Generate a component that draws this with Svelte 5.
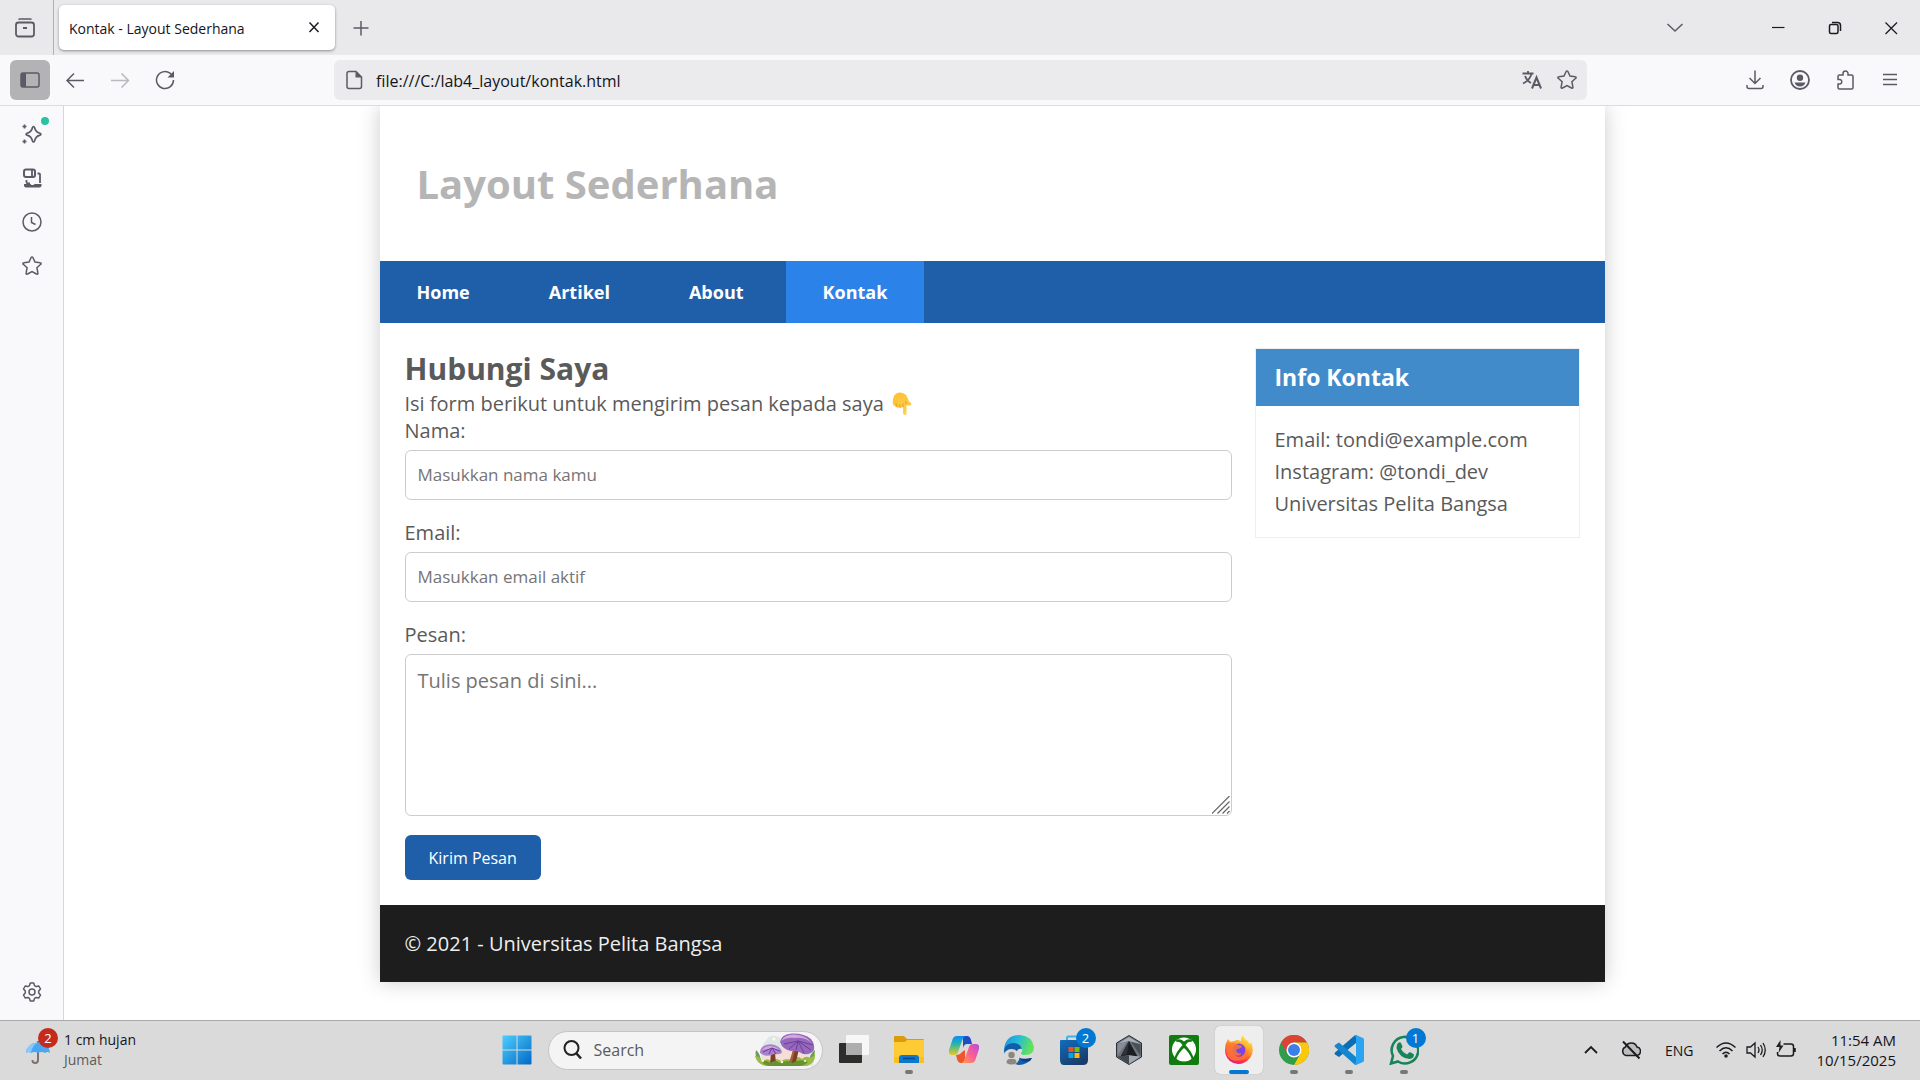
<script>
  let name = $state('');
  let email = $state('');
  let message = $state('');

  const links = ['Home', 'Artikel', 'About', 'Kontak'];
  const current = 'Kontak';
</script>

{#snippet star()}
  <svg class="icon" viewBox="0 0 20 20"><path d="M9.1 1.500a1 1 0 0 1 1.800 0l2.100 4.600 5.200.6a.9.9 0 0 1 .5 1.600l-3.800 3.500 1 5.200a.9.9 0 0 1-1.400 1L10 15.600 5.500 18a.9.9 0 0 1-1.400-1l1-5.200L1.300 8.300a.9.9 0 0 1 .5-1.600l5.200-.6z" /></svg>
{/snippet}

<div class="screen">
  <header class="tabs">
    <button class="tool recent" aria-label="Recent browsing">
      <svg class="icon" viewBox="0 0 20 20"><path d="M3.500 1.500Q4 .9 5 .9h10q1 0 1.500.6" /><rect x="1" y="4.500" width="18" height="14" rx="2.500" stroke-width="1.800" /><path d="M8 10h4" stroke-width="2" /></svg>
    </button>
    <div class="tab">
      <span>Kontak - Layout Sederhana</span>
      <button class="tool small" aria-label="Close tab"><svg class="icon dark" viewBox="0 0 20 20"><path d="m5.500 4.500 9 9.500m0-9.500-9 9.500" /></svg></button>
    </div>
    <button class="tool plus" aria-label="New tab"><svg class="icon" viewBox="0 0 20 20"><path d="M10 3v14.500M2.500 10h15" /></svg></button>
    <div class="window">
      <button class="tool list" aria-label="List all tabs"><svg class="icon" viewBox="0 0 20 20"><path d="m2.500 6 7.500 7 7.500-7" /></svg></button>
      <button class="tool" aria-label="Minimize"><svg class="icon dark" viewBox="0 0 20 20"><path d="M3 9.500h12.500" stroke-width="1.200" /></svg></button>
      <button class="tool" aria-label="Restore"><svg class="icon dark" viewBox="0 0 20 20"><rect x="4.500" y="6.500" width="8.500" height="9" rx="1.500" /><path d="M7 4.500h5.500q3 0 3 3V13" /></svg></button>
      <button class="tool" aria-label="Close"><svg class="icon dark" viewBox="0 0 20 20"><path d="m4.500 4.500 11.500 11.500m0-11.500-11.500 11.500" stroke-width="1.300" /></svg></button>
    </div>
  </header>

  <div class="toolbar">
    <div class="group">
      <button class="tool pressed" aria-label="Sidebar"><svg class="icon" viewBox="0 0 20 20"><rect x="1" y="3" width="18" height="14" rx="2" /><path d="M2 3h4v14H2l-1-1V4z" fill="#5b5b66" stroke="none" /></svg></button>
      <button class="tool" aria-label="Back"><svg class="icon" viewBox="0 0 20 20"><path d="M19 10.500H2M9 3.500l-7 7 7 7" /></svg></button>
      <button class="tool faded" aria-label="Forward"><svg class="icon" viewBox="0 0 20 20"><path d="M1 10.500h17M11.500 3.500l7 7-7 7" /></svg></button>
      <button class="tool" aria-label="Reload"><svg class="icon" viewBox="0 0 20 20"><path d="M18.500 10A8.500 8.500 0 1 1 15 3.200l1.500 1.300" /><path d="M19 1v6.500h-6.500z" fill="#5b5b66" stroke="none" /></svg></button>
    </div>
    <div class="address">
      <svg class="icon" viewBox="0 0 20 20"><path d="M5 1.500h7l5.500 5.500v9.500q0 2-2 2H5q-2 0-2-2v-13q0-2 2-2z" /><path d="M11.500 1v6.500H18z" fill="#5b5b66" stroke="none" /></svg>
      <input type="text" aria-label="Address" value="file:///C:/lab4_layout/kontak.html" />
      <button class="tool slim" aria-label="Translate"><svg class="icon" viewBox="0 0 20 20"><path d="M.5 3.500h11M6 1v2.500M9.500 4Q7.500 10.500 1 13.500M3 6q2 5 6 7" stroke-width="1.800" /><path d="m10 18.500 4.500-11 4.500 11M11.500 15h6" stroke-width="2" /></svg></button>
      <button class="tool slim" aria-label="Bookmark">{@render star()}</button>
    </div>
    <div class="group end">
      <button class="tool" aria-label="Downloads"><svg class="icon" viewBox="0 0 20 20"><path d="M10 .5v13M4.500 8l5.500 5.500L15.500 8M2 15v1.500q0 2 2 2h12q2 0 2-2V15" /></svg></button>
      <button class="tool" aria-label="Account"><svg class="icon" viewBox="0 0 20 20"><circle cx="10" cy="10" r="9" stroke-width="1.800" /><circle cx="10" cy="7.800" r="3.200" fill="#5b5b66" stroke="none" /><path d="M4.500 12.500h11q-1.500 4-5.500 4t-5.500-4z" fill="#5b5b66" stroke="none" /></svg></button>
      <button class="tool" aria-label="Extensions"><svg class="icon" viewBox="0 0 20 20"><path d="M8 5V3.500a2.500 2.500 0 0 1 5 0V5h3.500q1.500 0 1.500 1.500v11q0 1.500-1.500 1.500h-12Q3 19 3 17.500V14h2a2.300 2.300 0 0 0 0-4.500H3v-3Q3 5 4.500 5z" /></svg></button>
      <button class="tool" aria-label="Menu"><svg class="icon" viewBox="0 0 20 20"><path d="M3 4.500h14M3 9.500h14M3 14.500h14" /></svg></button>
    </div>
  </div>

  <div class="body">
    <aside class="rail">
      <button class="tool chat" aria-label="AI chatbot">
        <svg class="icon" viewBox="0 0 20 20"><path d="M11.500 2.500q.7 0 1 1 1.200 4.700 5.500 5.800.9.300.9.900t-.9.900q-4.300 1.100-5.500 5.900-.3 1-1 1t-1-1q-1.100-4.800-5.500-5.900-.9-.3-.9-.9t.9-.9q4.400-1.100 5.500-5.800.3-1 1-1zM2.500.5v4M.5 2.500h4M2.500 15.500v4M.5 17.500h4" stroke-width="1.700" /></svg>
        <i class="news"></i>
      </button>
      <button class="tool" aria-label="Synced tabs"><svg class="icon" viewBox="0 0 20 20"><rect x="2" y="1.500" width="11" height="7.500" rx="2" stroke-width="2" /><path d="M10 2v7M15.500 5.500h1.500q1 0 1 1V15M4.500 12v2q0 1.500 1.500 1.500h2" stroke-width="1.800" /><path d="M2 16h6.500l1 1h2l1-1h7v1.500q0 2-2 2H4q-2 0-2-2z" fill="#5b5b66" stroke="none" /></svg></button>
      <button class="tool" aria-label="History"><svg class="icon" viewBox="0 0 20 20"><circle cx="10" cy="10" r="9" /><path d="M9.500 5v5.500l4 2" /></svg></button>
      <button class="tool" aria-label="Bookmarks">{@render star()}</button>
      <button class="tool settings" aria-label="Settings"><svg class="icon" viewBox="0 0 20 20"><path d="M8.300 1h3.400l.8 2.600 1.700 1 2.600-.6 1.700 3-1.800 2v2l1.800 2-1.700 3-2.600-.6-1.700 1-.8 2.600H8.300l-.8-2.600-1.700-1-2.600.6-1.700-3 1.800-2V9l-1.800-2 1.700-3 2.600.6 1.700-1z" stroke-linejoin="round" /><circle cx="10" cy="10" r="3" /></svg></button>
    </aside>

    <div class="viewport">
      <div class="page">
        <header class="banner"><h1>Layout Sederhana</h1></header>
        <nav>
          {#each links as link}
            <a href="#{link.toLowerCase()}" class:active={link === current}>{link}</a>
          {/each}
        </nav>
        <div class="columns">
          <main>
            <h2>Hubungi Saya</h2>
            <p>
              Isi form berikut untuk mengirim pesan kepada saya
              <svg class="hand" viewBox="0 0 20 24" role="img" aria-label="Pointing down">
                <defs><linearGradient id="skin" x1="0" y1="0" x2=".4" y2="1"><stop stop-color="#fdc02f" /><stop offset="1" stop-color="#ffcf4d" /></linearGradient></defs>
                <path d="M2 4Q4 .5 8 .5q4 0 6 2.500 2 3 3 6.500 2.500 1 2.500 2.800-.5 1.700-3 1.200-1.200-.2-2-1v8.500q0 2-1.700 2T11 21v-6q-1 1-2.500.5-1.500.8-3-.3-1.800.3-2.500-1Q.8 13.800.7 11 .5 7 2 4z" fill="url(#skin)" />
                <path d="M11 15v-3.500M8.500 15.500q-1-1-.8-3.500M5.500 15Q4 13.500 4 11M14.500 12.500l-1-3" fill="none" stroke="#f0a02c" stroke-width="1.200" />
              </svg>
            </p>
            <form onsubmit={(e) => e.preventDefault()}>
              <label for="nama">Nama:</label>
              <input id="nama" type="text" placeholder="Masukkan nama kamu" bind:value={name} />
              <label for="email">Email:</label>
              <input id="email" type="email" placeholder="Masukkan email aktif" bind:value={email} />
              <label for="pesan">Pesan:</label>
              <div class="area">
                <textarea id="pesan" placeholder="Tulis pesan di sini..." bind:value={message}></textarea>
                <svg class="grip" viewBox="0 0 18 18"><path d="M0 17.500 17.500 0M5.500 17.500l12-12M10.500 17.500l7-7M15 17.500l2.500-2.500" fill="none" stroke="#666" stroke-width="1.200" /></svg>
              </div>
              <button class="send" type="submit">Kirim Pesan</button>
            </form>
          </main>
          <aside class="widget">
            <h3>Info Kontak</h3>
            <ul>
              <li>Email: tondi@example.com</li>
              <li>Instagram: @tondi_dev</li>
              <li>Universitas Pelita Bangsa</li>
            </ul>
          </aside>
        </div>
        <footer>© 2021 - Universitas Pelita Bangsa</footer>
      </div>
    </div>
  </div>

  <div class="taskbar">
    <button class="weather">
      <span class="sky">
        <svg viewBox="0 0 24 24"><path d="M12 1v2" stroke="#777" stroke-width="2" /><path d="M12 11v9q0 3-2.800 3t-2.700-3" fill="none" stroke="#7d716e" stroke-width="2" /><path d="M0 13Q1 3 12 2.500 23 3 24 13q-2.500-2-5 0-3.500-2-7 0-3.500-2-7 0-2.500-2-5 0z" fill="#4ba7f2" /><path d="M0 13Q1 3 12 2.500 6 5 5 13q-2.500-2-5 0z" fill="#83cbfb" /></svg>
        <b class="badge alert">2</b>
      </span>
      <span class="lines"><span>1 cm hujan</span><span class="dim">Jumat</span></span>
    </button>

    <div class="apps">
      <button class="app" aria-label="Start">
        <svg viewBox="0 0 30 30"><defs><linearGradient id="win" x1="0" y1="0" x2="30" y2="30" gradientUnits="userSpaceOnUse"><stop stop-color="#4fd0ff" /><stop offset="1" stop-color="#0067c5" /></linearGradient></defs><path d="M1.500.5H14.500V14.500H.5V1.500q0-1 1-1zM15.500.5h13q1 0 1 1v13h-14zM.5 15.500h14v14h-13q-1 0-1-1zM15.500 15.500h14v13q0 1-1 1h-13z" fill="url(#win)" /></svg>
      </button>
      <label class="search">
        <svg class="lens" viewBox="0 0 20 20"><circle cx="8.500" cy="8" r="7" fill="none" stroke="#222" stroke-width="2" /><path d="m13.500 13.500 4.500 5" stroke="#222" stroke-width="2.600" /></svg>
        <input type="text" placeholder="Search" aria-label="Search" />
        <svg class="mushrooms" viewBox="0 0 62 34">
          <path d="M7 17Q9 10 13 6q3-4 8-3 4 0 6 3l8 8 22 2q4 10 2 17H8z" fill="#dfe7e6" />
          <path d="M8 27Q12 17 25 17q14-4 31 8v6H8z" fill="#f6ddd5" />
          <path d="M2 17q5 4 5 13-7-4-5-13zM61 17q-6 4-6 13 6-4 6-13z" fill="#6f9d56" />
          <path d="M1 23q5-1 7 6 5-5 9-1 5-4 10 0 7-4 11 0 5-7 10-2 4-4 8-1 4-1 5-5 1 10-8 13H13Q3 32 1 23z" fill="#9dba45" />
          <path d="M17 19h4l1 13h-6zM39 17l6-1-4 17h-8q5-7 6-16z" fill="#7b4027" />
          <path d="M39 17l2 0-4 16h-3z" fill="#a85f3a" />
          <path d="M6 20q0-6 6-8 6-2 11 1 4 2 5 6-1 3-8 2-7 4-14-1z" fill="#a881cc" />
          <path d="M26 9Q27 1 38 .5 50 0 57 6q4 5 3 11-3 5-11 4-6-4-12-3-8-1-11-9z" fill="#9668bd" />
          <path d="M27 8Q31 1 40 1.500 52 2 58 10q-7-6-17-5-8-1-14 3zM8 17q3-4 9-4 6 1 9 4-9-3-18 0z" fill="#d3a8df" />
          <path d="m44 8-14 3M44 8l-9 8M44 8l-2 9M44 8l6 12M44 8l13 9M44 8l15 4M18 15l-9 4M18 15l-3 6M18 15l4 6M18 15l8 3" stroke="#6b4096" stroke-width="1" fill="none" />
          <path d="M8 29q4-3 8 1 6-4 10 0 8-4 12 0 8-5 16-1-4 4-9 4H17q-6 0-9-4z" fill="#66922f" />
          <g fill="#fffbe0"><circle cx="9" cy="28" r="1" /><circle cx="28" cy="29" r="1.200" /><circle cx="51" cy="28" r="1" /><circle cx="20" cy="6" r="1.500" /></g>
        </svg>
      </label>
      <button class="app" aria-label="Task view">
        <svg viewBox="0 0 30 30"><rect y="8" width="23" height="20" rx="1" fill="#2d2d2c" /><rect x="7" y="0" width="23" height="20" rx="1" fill="#f7f7f7" /><path d="M7 8h16v12H8q-1 0-1-1z" fill="#aeaeae" /></svg>
      </button>
      <button class="app running" aria-label="File Explorer">
        <svg viewBox="0 0 30 30"><path d="M0 2q0-1 1-1h8q1 0 2 1l2 2h16q1 0 1 1v4H0z" fill="#dc9c0a" /><path d="M0 7h11l2-2h17v22q0 1-1 1H1q-1 0-1-1z" fill="#ffcb35" /><path d="M0 22h30v5q0 1-1 1H1q-1 0-1-1z" fill="#f9c01f" /><path d="M5 28v-5q0-3 3-3h14q3 0 3 3v5z" fill="#0c78cf" /><path d="M9 23.500h12" stroke="#07478a" stroke-width="1.500" /></svg>
      </button>
      <button class="app" aria-label="Copilot">
        <svg viewBox="0 0 30 30"><defs><linearGradient id="cpa" x2="0" y2="1"><stop stop-color="#0f8bf0" /><stop offset=".4" stop-color="#22b4b2" /><stop offset="1" stop-color="#e7c91d" /></linearGradient><linearGradient id="cpb" x1="1" x2="0" y2="1"><stop stop-color="#b44be2" /><stop offset=".5" stop-color="#fb5d93" /><stop offset="1" stop-color="#ffa050" /></linearGradient></defs>
          <path d="M14 1h4q3 0 4 4l1 4h-5q-3 0-4 4z" fill="#1d4dc4" /><path d="M8 1h8q-2 1-3 5L9 17q-1 3-4 3H3q-4 0-3-5L3 6q1-5 5-5z" fill="url(#cpa)" /><path d="M16 28h-4q-3 0-4-4l-1-4q4 0 6-3l3-2z" fill="#f0562d" /><path d="M22 28h-9q2-1 3-5l4-11q1-3 4-3h3q4 0 3 5l-3 9q-1 5-5 5z" fill="url(#cpb)" /></svg>
      </button>
      <button class="app" aria-label="Edge">
        <svg viewBox="0 0 30 30"><defs><linearGradient id="edg" x2="1" y2=".3"><stop stop-color="#1b8ce0" /><stop offset=".5" stop-color="#25bdd6" /><stop offset="1" stop-color="#62e25b" /></linearGradient></defs><path d="M0 15Q1 0 16 0q12 1 14 12 0 8-9 8-4 0-4-2 2-2 1-5-3-5-9-3-6 2-9 5z" fill="url(#edg)" /><path d="M0 15Q2 8 10 8q7 1 8 6-5-1-6 5-1 8 16 4-5 7-13 7Q0 28 0 15z" fill="#125da9" /><path d="M12 18q1 8 16 5l-2 3q-10 3-14-8z" fill="#0b3f82" /><circle cx="7.500" cy="22" r="8" fill="#dcd9d5" /><circle cx="7.500" cy="20" r="3.200" fill="#8b8782" /><path d="M2.500 28q0-4 3-4h4q3 0 3 4-5 3-10 0z" fill="#8b8782" /></svg>
      </button>
      <button class="app" aria-label="Microsoft Store">
        <svg viewBox="0 0 30 30"><defs><linearGradient id="sto" x2=".6" y2="1"><stop stop-color="#0f6fbd" /><stop offset="1" stop-color="#1b3b69" /></linearGradient></defs><path d="M8 7V3q0-1.500 1.500-1.500h11Q22 1.500 22 3v4" fill="none" stroke="#39b5ee" stroke-width="2" /><path d="M2 5h26q1 0 1 1v19q0 5-5 5H5q-4 0-4-5V6q0-1 1-1z" fill="url(#sto)" /><path d="M9.500 12h5v5h-5z" fill="#f25022" /><path d="M15.500 12h5v5h-5z" fill="#7fba00" /><path d="M9.500 18h5v5h-5z" fill="#00a4ef" /><path d="M15.500 18h5v5h-5z" fill="#ffb900" /></svg>
        <b class="badge">2</b>
      </button>
      <button class="app" aria-label="Armoury Crate">
        <svg viewBox="0 0 30 30"><path d="m15 .5 12.500 7.500v14L15 29.500 2.500 22V8z" fill="#6d747c" stroke="#2c3036" stroke-width="1" /><path d="m15 2 11.500 7L15 6 3.500 9z" fill="#a9b0b8" /><path d="M3.500 9.500 13 7 3.500 20z" fill="#878e97" /><path d="M17 7l9.500 2.500v11z" fill="#4a5058" /><path d="m15 6 8.500 15.500L15 20l-8.500 1.500z" fill="#1b1e23" /><path d="m15 6-2 12.500L6.500 21.500z" fill="#2f343b" /><path d="m3.500 21.500 11.500-1v8.500z" fill="#42474f" /><path d="m15 20.500 11.500 1L15 29z" fill="#a3a9b1" /></svg>
      </button>
      <button class="app" aria-label="Xbox">
        <svg viewBox="0 0 30 30"><rect width="30" height="30" rx="2" fill="#107c10" /><circle cx="15" cy="14.500" r="12" fill="#fff" /><path d="M7 5q4-2 8 1.500Q19 3 23 5l-.5 2Q19 6 16.500 10 23 17 24.500 23l-1.500 1.500Q20 17 15 13 10 17 7 24.500L5.500 23Q7 17 13.500 10 11 6 7.500 7z" fill="#107c10" /></svg>
      </button>
      <button class="app running active" aria-label="Firefox">
        <svg viewBox="0 0 30 30"><defs><linearGradient id="ffx" x1=".8" y1="0" x2=".3" y2="1"><stop stop-color="#fff04a" /><stop offset=".45" stop-color="#ff9a26" /><stop offset=".75" stop-color="#fb3a49" /><stop offset="1" stop-color="#e31587" /></linearGradient></defs><path d="M4 4q1 2 3 3 2-1 4-1l1-1q2 0 2 0l3 1Q17 2 19 0q1 4 5 6 1 1 1 3 2-1 2-2 4 10-1 16-5 6-12 6Q4 28 1.500 19 0 10 4 4z" fill="url(#ffx)" /><circle cx="15" cy="15" r="6.500" fill="#7a44e0" /><path d="M4 9q4-2 7-1l3 2q4 0 4 2-2 2-5 2-2 2 1 4 3 1 4 0-2 4-7 2 3 4 8 1 4-3 2-9 5 7 0 12Q7 29 3 20 1 13 4 9z" fill="#ff7a30" opacity=".8" /></svg>
      </button>
      <button class="app running" aria-label="Chrome">
        <svg viewBox="0 0 30 30"><circle cx="15" cy="15" r="15" fill="#2f9d4c" /><path d="M2 7.500A15 15 0 0 1 28 7.500H15l-6.500 11z" fill="#dd4235" /><path d="M28 7.500A15 15 0 0 1 15 30l6.500-11.500L15 7.500z" fill="#fdc80b" /><circle cx="15" cy="15" r="7.500" fill="#fff" /><circle cx="15" cy="15" r="6" fill="#3c7fe8" /></svg>
      </button>
      <button class="app running" aria-label="Visual Studio Code">
        <svg viewBox="0 0 30 30"><path d="m22 8-17 14-4-2.500q-1-1 0-2L20 1q1-1 2.500-1z" fill="#0b6db5" /><path d="M22 22 5 7.500 1 10q-1 1 0 2l19 17q1 1 2.500 1z" fill="#1485cf" /><path d="m22 0 7 3q1 .5 1 2v20q0 1.500-1 2l-7 3q-1 0-2-1 2 0 2-2V3q0-2-2-2 1-1 2-1z" fill="#2ba4f1" /></svg>
      </button>
      <button class="app running" aria-label="WhatsApp">
        <svg viewBox="0 0 30 30"><path d="M2 28.500l2-7.500A13.300 13.300 0 1 1 9 26.500z" fill="none" stroke="#17845a" stroke-width="2.600" /><path d="M9 8q2-1.500 3 0l1.500 3.500q0 1-1.500 2.500 2 4 6 5.500l2-2q1-.5 2 0l3 2q0 4-4.500 4.500Q10 23 7.500 13q0-3.500 1.500-5z" fill="#17845a" /></svg>
        <b class="badge">1</b>
      </button>
    </div>

    <div class="tray">
      <button class="tool" aria-label="Show hidden icons"><svg class="icon dark" viewBox="0 0 20 20"><path d="m4 13 6-6 6 6" stroke-width="1.800" /></svg></button>
      <button class="tool cloud" aria-label="OneDrive"><svg class="icon dark" viewBox="0 0 20 20"><path d="M5 15.500a4.500 4.500 0 0 1-.5-8.500Q6 3 10.500 3q4 0 5.500 4a4.300 4.300 0 0 1-.5 8.500z" fill="#bdbdbd" /><path d="m2 1.500 16.500 17" stroke-width="2" /></svg></button>
      <button class="lang">ENG</button>
      <button class="status" aria-label="Network, volume and battery">
        <svg class="icon dark" viewBox="0 0 20 20"><path d="M.5 7.500Q10-1.500 19.500 7.500M3.500 11Q10 4.500 16.500 11M6.500 14Q10 10.500 13.500 14" /><circle cx="10" cy="16" r="1.800" fill="#222" stroke="none" /></svg>
        <svg class="icon dark" viewBox="0 0 20 20"><path d="M1 7v6h3.500l4.500 4V3L4.500 7zM12 7q2 3 0 6M14.500 5q3.500 5 0 10M17 3q4.500 7 0 14" stroke-width="1.300" /></svg>
        <svg class="icon dark" viewBox="0 0 20 20"><path d="M7.500 4H15q2.500 0 2.500 2.500v7Q17.500 16 15 16H4q-2.500 0-2.500-2.500V12" /><path d="M18.500 8v4" stroke-width="2.500" /><path d="M4.500 0 0 7h3.500L2.500 13 7.500 5.500H4.500z" fill="#222" stroke="none" /></svg>
      </button>
      <button class="lines clock"><span>11:54 AM</span><span>10/15/2025</span></button>
    </div>
  </div>
</div>

<style>
  :global(body) { margin: 0; }
  .screen, .screen * { box-sizing: border-box; }
  .screen { min-height: 100vh; display: flex; flex-direction: column; font-family: "Open Sans", "Noto Sans", sans-serif; font-size: 14px; color: #15141a; background: #fff; }
  button { border: 0; padding: 0; background: none; font: inherit; color: inherit; }
  svg { display: block; }
  .tool { width: 40px; height: 40px; display: grid; place-items: center; flex: none; border-radius: 6px; position: relative; }
  .icon { width: 20px; height: 20px; fill: none; stroke: #5b5b66; stroke-width: 1.500; }
  .icon.dark { stroke: #1c1b22; }

  .tabs { height: 55px; display: flex; align-items: center; background: #e9e9eb; }
  .recent { width: 54px; height: 55px; padding-right: 4px; border-right: 1px solid #b0b0b5; border-radius: 0; }
  .tab { width: 276px; height: 45px; margin-left: 5px; padding: 1px 11px 0 10px; display: flex; align-items: center; justify-content: space-between; border-radius: 5px; background: #fff; box-shadow: 0 1px 3px rgba(0, 0, 0, 0.4); }
  .small { width: 20px; height: 20px; }
  .plus { margin-left: 6px; }
  .window { margin-left: auto; padding-right: 1px; display: flex; }
  .window .tool { width: 56px; }
  .window .list { margin-right: 48px; }

  .toolbar { height: 51px; padding-bottom: 1px; display: grid; grid-template-columns: 334px minmax(0, 1fr) 333px; align-items: center; background: #f9f9fb; border-bottom: 1px solid #dcdce0; }
  .group { padding-left: 10px; display: flex; gap: 5px; }
  .group.end { padding: 0 10px; justify-content: flex-end; }
  .pressed { background: #b3b3b6; }
  .faded { opacity: 0.4; }
  .address { height: 40px; padding: 0 3px 0 10px; display: flex; align-items: center; border-radius: 6px; background: #ebebed; }
  .address input { flex: 1; min-width: 0; height: 32px; padding: 2px 12px 0; border: 0; outline: 0; background: none; font: inherit; font-size: 16px; color: inherit; }
  .slim { width: 35px; }

  .body { flex: 1; display: flex; }
  .rail { width: 64px; padding: 8px 12px; display: flex; flex-direction: column; gap: 4px; background: #f9f9fb; border-right: 1px solid #d5d5da; }
  .news { position: absolute; top: 3px; right: 3px; width: 8px; height: 8px; border-radius: 50%; background: #2ac3a2; }
  .settings { margin-top: auto; }
  .viewport { flex: 1; min-width: 0; padding-bottom: 38px; overflow: hidden; }

  .page { max-width: 1225px; margin: 0 auto; background: #fff; box-shadow: 0 0 20px #ccc; font-size: 20px; line-height: 27px; color: #5a5a5a; }
  h1, h2, h3, p, ul { margin: 0; padding: 0; }
  .banner { padding: 50px 37px; }
  h1 { font-size: 40px; line-height: 55px; color: #b5b5b5; }
  nav { display: flex; gap: 5px; background: #1f5faa; }
  nav a { padding: 0 37px; font-size: 18px; line-height: 62px; font-weight: 700; color: #fff; text-decoration: none; }
  nav .active { background: #2b83ea; }
  .columns { padding: 25px; display: grid; grid-template-columns: minmax(0, 1fr) 325px; align-items: start; gap: 23px; }
  h2 { font-size: 30px; line-height: 42px; }
  .hand { display: inline-block; width: 20px; height: 24px; margin-left: 3px; vertical-align: -5px; }
  p { height: 27px; }
  form { display: flex; flex-direction: column; }
  form input, textarea { display: block; width: 100%; border: 1px solid #ccc; border-radius: 6px; padding: 12px; outline: 0; background: #fff; font: inherit; color: inherit; }
  form input { height: 50px; padding: 10px 12px 12px; font-size: 17px; margin: 6px 0 19px; }
  form input::placeholder, textarea::placeholder { color: #757575; opacity: 1; }
  .area { position: relative; margin: 6px 0 19px; }
  textarea { height: 162px; resize: none; }
  .grip { position: absolute; right: 2px; bottom: 2px; width: 18px; height: 18px; }
  .send { align-self: flex-start; height: 45px; padding: 1px 24px 0; border-radius: 6px; background: #1f5faa; color: #fff; font-size: 16px; }
  .widget { border: 1px solid #eee; }
  h3 { padding: 0 19px 1px; font-size: 23px; line-height: 56px; color: #fff; background: #428bca; }
  ul { padding: 18px 19px 17px; list-style: none; line-height: 32px; }
  footer { padding: 25px; background: #1d1d1d; color: #eee; }

  .taskbar { height: 60px; padding-bottom: 1px; display: grid; grid-template-columns: 1fr auto 1fr; align-items: center; background: #dadada; border-top: 1px solid #aaa; }
  .weather { padding-left: 26px; display: flex; align-items: center; gap: 14px; justify-self: start; }
  .sky { position: relative; width: 24px; padding-top: 4px; }
  .badge { position: absolute; top: 2px; right: 2px; width: 20px; height: 20px; border-radius: 50%; background: #0078d4; color: #fff; font-size: 13px; line-height: 20px; font-weight: 400; text-align: center; }
  .badge.alert { top: -8px; right: -8px; background: #c42b1c; }
  .lines { padding-bottom: 1px; display: flex; flex-direction: column; line-height: 20px; text-align: left; }
  .dim { color: #5c5c5c; }
  .apps { display: flex; align-items: center; gap: 7px; }
  .app { position: relative; width: 48px; height: 48px; display: grid; place-items: center; border-radius: 5px; }
  .app svg { width: 30px; height: 30px; }
  .app.active { background: #eee; box-shadow: 0 0 1px #999; }
  .running::after { content: ""; position: absolute; bottom: 0; left: 20px; width: 8px; height: 4px; border-radius: 2px; background: #777; }
  .running.active::after { left: 14px; width: 20px; background: #0078d4; }
  .search { width: 275px; height: 39px; padding: 0 6px 0 14px; display: flex; align-items: center; border: 1px solid #c4c4c4; border-radius: 20px; background: #f4f4f4; }
  .lens { width: 20px; height: 20px; flex: none; }
  .search input { flex: 1; min-width: 0; padding: 0 11px; border: 0; outline: 0; background: none; font: inherit; font-size: 16px; }
  .search input::placeholder { color: #5a5a5a; opacity: 1; }
  .mushrooms { width: 62px; height: 34px; flex: none; }
  .tray { justify-self: end; padding-right: 24px; display: flex; align-items: center; }
  .cloud { margin-right: 14px; }
  .status { margin: 0 20px 0 23px; display: flex; gap: 10px; }
  .clock { font-size: 15px; text-align: right; }
</style>
